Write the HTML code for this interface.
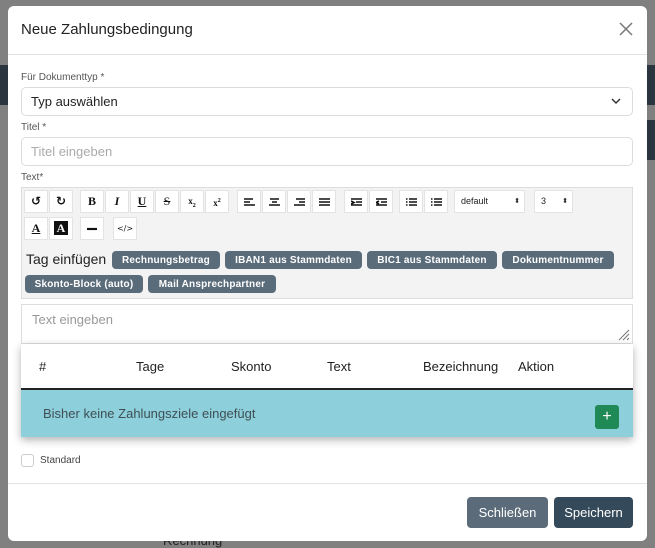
<!DOCTYPE html>
<html><head><meta charset="utf-8"><style>
*{box-sizing:border-box;margin:0;padding:0}
body{width:655px;height:548px;overflow:hidden;background:#808080;font-family:"Liberation Sans",sans-serif;position:relative;color:#222}
.a{position:absolute}
.modal{left:8px;top:6px;width:639px;height:535px;background:#fff;border-radius:6px}
.lbl{font-size:10px;color:#555}
.inp{border:1px solid #dcdcdc;border-radius:5px;background:#fff}
.tb{position:absolute;width:24px;height:23px;background:#fff;border:1px solid #e3e3e3;font-family:"Liberation Serif",serif;font-weight:bold;font-size:12px;text-align:center;line-height:21px;color:#111}
.badge{position:absolute;height:18px;background:#5a6b7a;color:#fff;border-radius:4px;font-size:10px;font-weight:bold;line-height:19px;text-align:center;letter-spacing:.2px}
.th{position:absolute;top:359px;font-size:13px;color:#222}
.ic{display:block;margin:7px auto 0}
</style></head><body>
<div class="a" style="left:0;top:65px;width:8px;height:40px;background:#2a3540"></div>
<div class="a" style="left:647px;top:65px;width:8px;height:40px;background:#2a3540"></div>
<div class="a" style="left:647px;top:120px;width:8px;height:40px;background:#2a3540"></div>
<div class="a" style="left:163px;top:533px;font-size:13px;color:#222">Rechnung</div>
<div class="a modal"></div>
<div class="a" style="left:21px;top:21px;font-size:15px;color:#222">Neue Zahlungsbedingung</div>
<svg class="a" style="left:619px;top:22px" width="14" height="14"><path d="M1 1L13 13M13 1L1 13" stroke="#777" stroke-width="1.5"/></svg>
<div class="a" style="left:8px;top:54px;width:639px;height:1px;background:#e3e3e3"></div>
<div class="a lbl" style="left:21px;top:72px">Für Dokumenttyp *</div>
<div class="a inp" style="left:21px;top:87px;width:612px;height:29px"></div>
<div class="a" style="left:31px;top:94px;font-size:13px;color:#222">Typ auswählen</div>
<svg class="a" style="left:611px;top:97px" width="10" height="8"><path d="M1 2L5 6L9 2" stroke="#333" stroke-width="1.5" fill="none"/></svg>
<div class="a lbl" style="left:21px;top:122px">Titel *</div>
<div class="a inp" style="left:21px;top:137px;width:612px;height:29px"></div>
<div class="a" style="left:31px;top:144px;font-size:13px;color:#aaa">Titel eingeben</div>
<div class="a lbl" style="left:21px;top:172px">Text*</div>
<div class="a" style="left:21px;top:187px;width:612px;height:112px;background:#f3f3f3;border:1px solid #ddd"></div>
<div class="tb" style="left:24px;top:190px;font-family:'DejaVu Sans';font-size:12px">↺</div>
<div class="tb" style="left:49px;top:190px;font-family:'DejaVu Sans';font-size:12px">↻</div>
<div class="tb" style="left:80px;top:190px">B</div>
<div class="tb" style="left:105px;top:190px;font-style:italic">I</div>
<div class="tb" style="left:130px;top:190px;text-decoration:underline">U</div>
<div class="tb" style="left:155px;top:190px;text-decoration:line-through;font-weight:normal">S</div>
<div class="tb" style="left:180px;top:190px;font-size:9px">x<sub style="font-size:6px">2</sub></div>
<div class="tb" style="left:205px;top:190px;font-size:9px">x<sup style="font-size:6px">2</sup></div>
<div class="tb" style="left:237px;top:190px"><svg class="ic" width="11" height="9"><path d="M0 1H9M0 4H6M0 7H11" stroke="#111" stroke-width="1.6"/></svg></div>
<div class="tb" style="left:262px;top:190px"><svg class="ic" width="11" height="9"><path d="M1 1H10M3 4H8M0 7H11" stroke="#111" stroke-width="1.6"/></svg></div>
<div class="tb" style="left:287px;top:190px"><svg class="ic" width="11" height="9"><path d="M2 1H11M5 4H11M0 7H11" stroke="#111" stroke-width="1.6"/></svg></div>
<div class="tb" style="left:312px;top:190px"><svg class="ic" width="11" height="9"><path d="M0 1H11M0 4H11M0 7H11" stroke="#111" stroke-width="1.6"/></svg></div>
<div class="tb" style="left:344px;top:190px"><svg class="ic" width="11" height="9"><path d="M0 1H11M5 4H11M0 7H11M0 3L3 4.5L0 6" stroke="#111" stroke-width="1.6" fill="none"/></svg></div>
<div class="tb" style="left:369px;top:190px"><svg class="ic" width="11" height="9"><path d="M0 1H11M5 4H11M0 7H11M3 3L0 4.5L3 6" stroke="#111" stroke-width="1.6" fill="none"/></svg></div>
<div class="tb" style="left:399px;top:190px"><svg class="ic" width="11" height="9"><path d="M3 1H11M3 4H11M3 7H11M0 1H1.5M0 4H1.5M0 7H1.5" stroke="#111" stroke-width="1.4"/></svg></div>
<div class="tb" style="left:424px;top:190px"><svg class="ic" width="11" height="9"><path d="M3 1H11M3 4H11M3 7H11M0 1H1.5M0 4H1.5M0 7H1.5" stroke="#111" stroke-width="1.4"/></svg></div>
<div class="a" style="left:454px;top:190px;width:71px;height:23px;background:#fff;border:1px solid #e3e3e3;font-size:9px;line-height:21px;padding-left:6px">default<span style="position:absolute;right:4px;font-size:7px">⬍</span></div>
<div class="a" style="left:534px;top:190px;width:39px;height:23px;background:#fff;border:1px solid #e3e3e3;font-size:9px;line-height:21px;padding-left:6px">3<span style="position:absolute;right:4px;font-size:7px">⬍</span></div>
<div class="tb" style="left:24px;top:217px;text-decoration:underline">A</div>
<div class="tb" style="left:49px;top:217px"><span style="background:#111;color:#fff;padding:0 3px">A</span></div>
<div class="tb" style="left:80px;top:217px"><svg class="ic" width="10" height="9"><path d="M0 4H10" stroke="#111" stroke-width="2.2"/></svg></div>
<div class="tb" style="left:113px;top:217px;font-size:8px;font-family:'DejaVu Sans';font-weight:normal">&lt;/&gt;</div>
<div class="a" style="left:26px;top:251px;font-size:14px;color:#222">Tag einfügen</div>
<div class="badge" style="left:112px;top:251px;width:108px">Rechnungsbetrag</div>
<div class="badge" style="left:225px;top:251px;width:137px">IBAN1 aus Stammdaten</div>
<div class="badge" style="left:367px;top:251px;width:130px">BIC1 aus Stammdaten</div>
<div class="badge" style="left:502px;top:251px;width:112px">Dokumentnummer</div>
<div class="badge" style="left:25px;top:275px;width:118px">Skonto-Block (auto)</div>
<div class="badge" style="left:148px;top:275px;width:128px">Mail Ansprechpartner</div>
<div class="a" style="left:21px;top:304px;width:612px;height:40px;border:1px solid #ddd;background:#fff"></div>
<div class="a" style="left:32px;top:312px;font-size:13px;color:#999">Text eingeben</div>
<svg class="a" style="left:617px;top:328px" width="13" height="13"><path d="M12 2L2 12M12 6L6 12M12 10L10 12" stroke="#777" stroke-width="1"/></svg>
<div class="a" style="left:21px;top:344px;width:612px;height:93px;background:#fff;box-shadow:0 3px 8px rgba(0,0,0,.3)"></div>
<div class="th" style="left:39px">#</div>
<div class="th" style="left:136px">Tage</div>
<div class="th" style="left:231px">Skonto</div>
<div class="th" style="left:327px">Text</div>
<div class="th" style="left:423px">Bezeichnung</div>
<div class="th" style="left:518px">Aktion</div>
<div class="a" style="left:21px;top:388px;width:612px;height:2px;background:#222"></div>
<div class="a" style="left:21px;top:390px;width:612px;height:47px;background:#8dcfdb"></div>
<div class="a" style="left:43px;top:406px;font-size:13px;color:#3f4f55">Bisher keine Zahlungsziele eingefügt</div>
<div class="a" style="left:595px;top:405px;width:24px;height:24px;background:#1f8a56;border-radius:3px;color:#fff;text-align:center;font-size:16px;line-height:23px">+</div>
<div class="a" style="left:21px;top:454px;width:13px;height:13px;border:1px solid #ccc;border-radius:3px;background:#fff"></div>
<div class="a" style="left:40px;top:455px;font-size:10px;color:#444">Standard</div>
<div class="a" style="left:8px;top:483px;width:639px;height:1px;background:#e3e3e3"></div>
<div class="a" style="left:467px;top:497px;width:81px;height:31px;background:#5b6b79;border-radius:4px;color:#fff;font-size:13px;line-height:31px;text-align:center">Schließen</div>
<div class="a" style="left:554px;top:497px;width:79px;height:31px;background:#34495a;border-radius:4px;color:#fff;font-size:13px;line-height:31px;text-align:center">Speichern</div>
</body></html>
